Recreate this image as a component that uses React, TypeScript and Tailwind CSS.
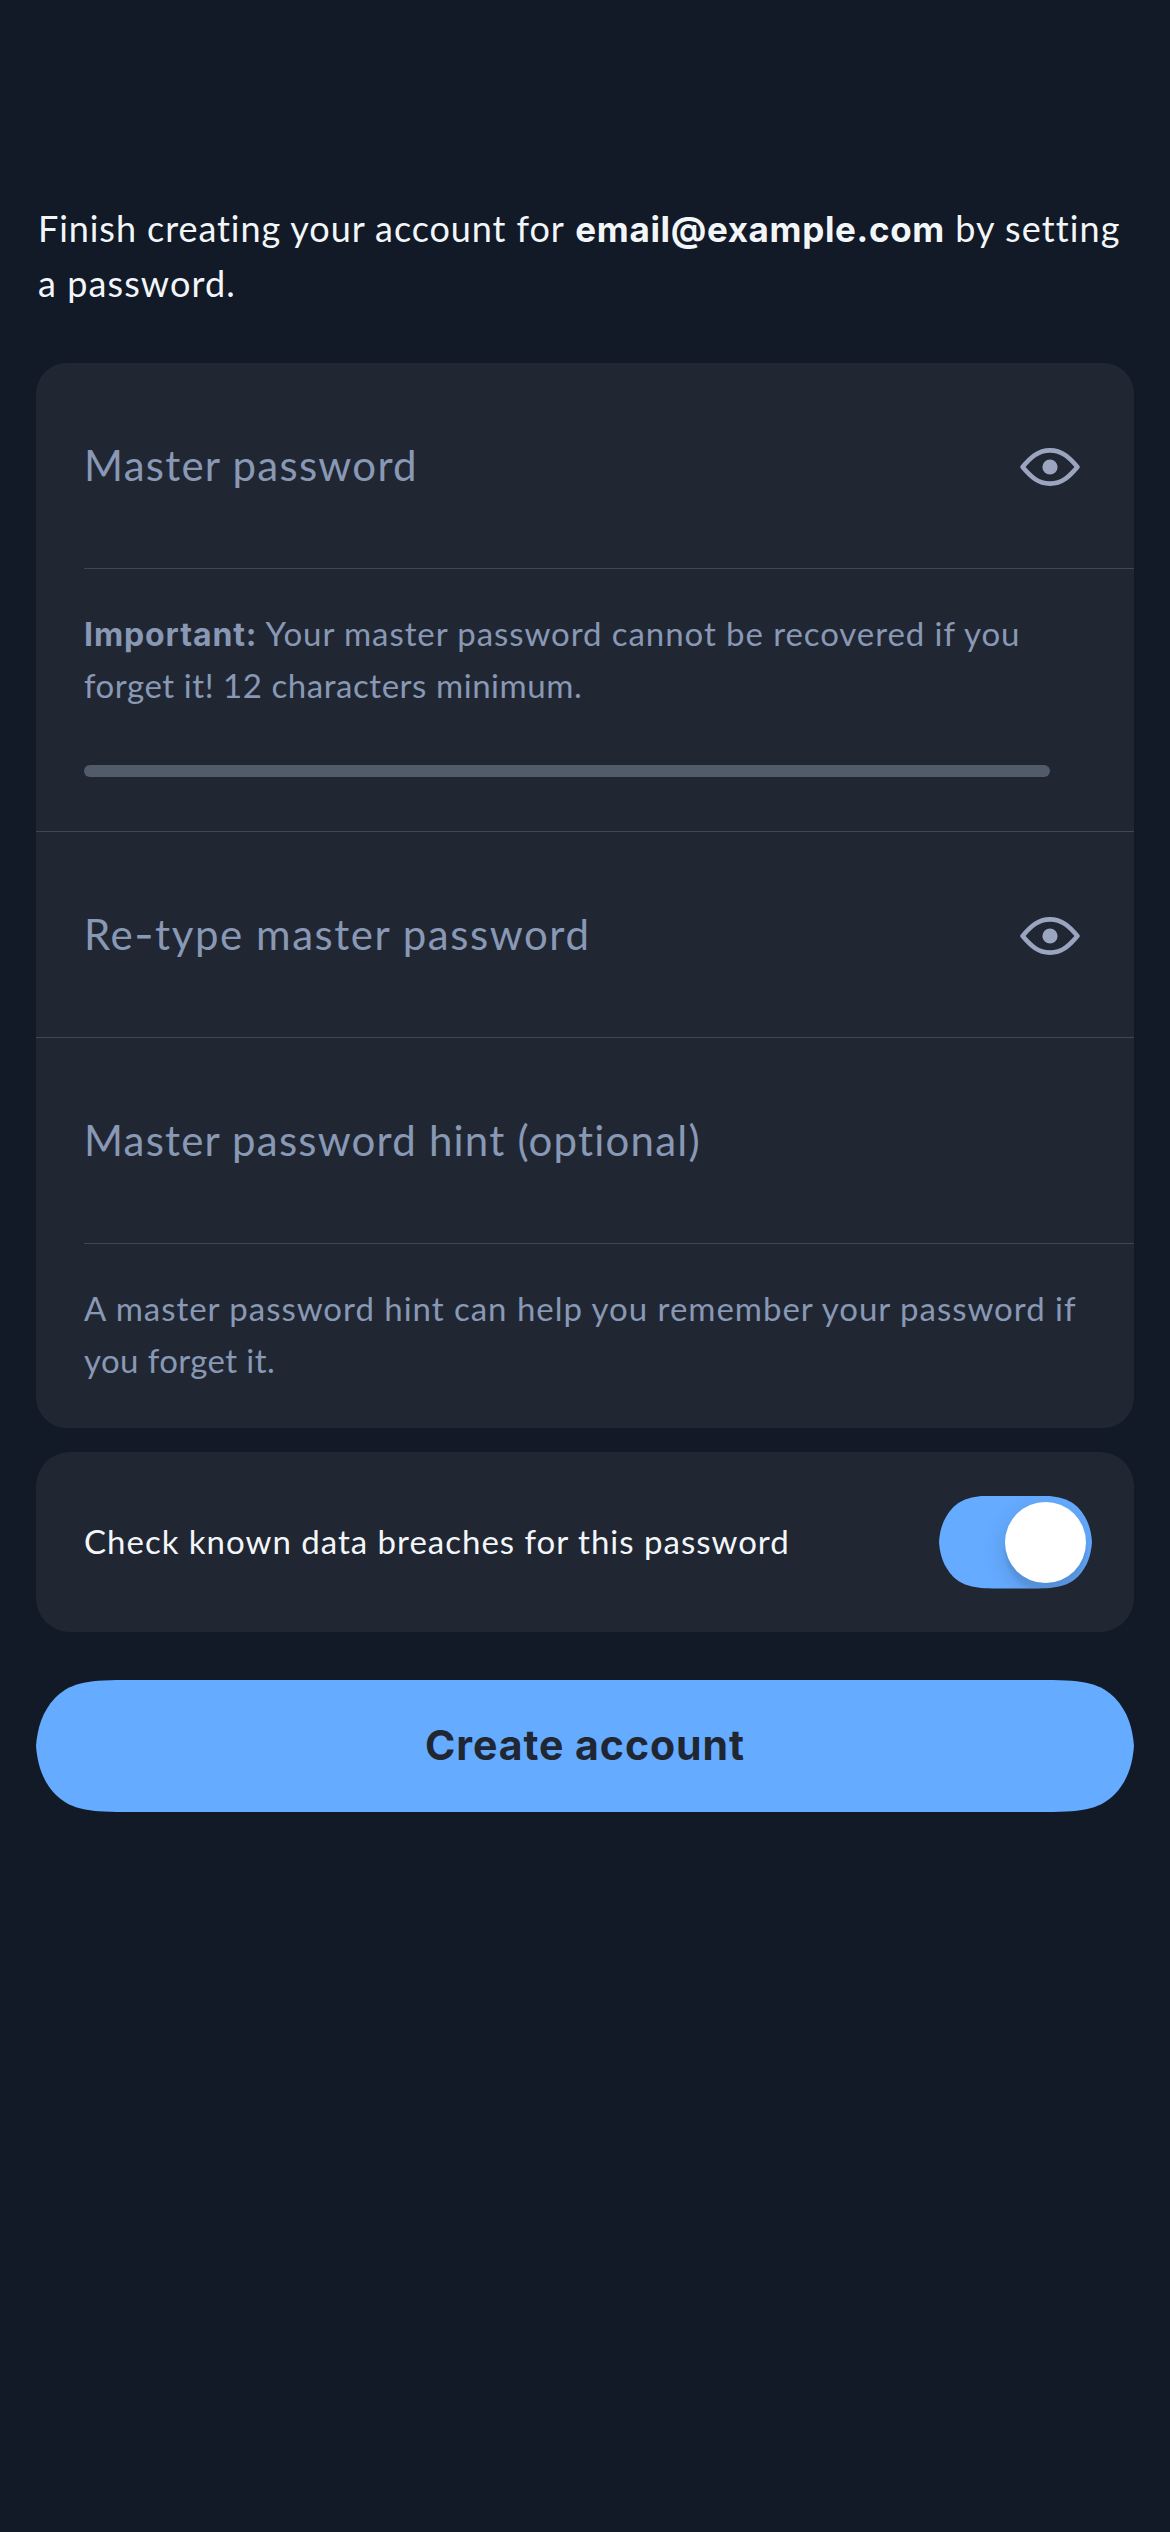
function EyeIcon() {
  return (
    <svg width="60" height="38" viewBox="0 0 60 38" fill="none" className="mt-[3px] block">
      <path
        d="M2.6 19C10.5 9.6 18 2.4 30 2.4S49.5 9.6 57.4 19C49.5 28.4 42 35.6 30 35.6S10.5 28.4 2.6 19Z"
        stroke="#9BA5BF"
        strokeWidth="4.6"
        strokeLinejoin="round"
      />
      <circle cx="30" cy="19" r="7.6" fill="#9BA5BF" />
    </svg>
  );
}

function Bold({ className, children }: { className: string; children: string }) {
  return <strong className={`font-['Inter',sans-serif] font-bold leading-none ${className}`}>{children}</strong>;
}

export default function App() {
  return (
    <main className="flex h-[2532px] w-[1170px] flex-col bg-[#121A27] px-9 pt-[201px] font-['Lato',sans-serif] text-[#F3F6F9]">
      <p className="h-[162px] whitespace-nowrap pl-[2px] text-[36px] leading-[55px]">
        <span className="block h-[55px]">
          <span className="tracking-[0.93px]">Finish creating your account for </span>
          <Bold className="ml-px text-[35px] tracking-[0.66px]">email@example.com</Bold>
          <span className="tracking-[1.1px]"> by setting</span>
        </span>
        <span className="block h-[55px] tracking-[1.08px]">a password.</span>
      </p>

      <section className="h-[1065px] overflow-hidden rounded-[31px] bg-[#202733] text-[#8898B5]">
        <div className="ml-12 flex h-[206px] items-center justify-between border-b border-[#404652] pr-[54px]">
          <span className="pb-px text-[42px] tracking-[1.26px]">Master password</span>
          <EyeIcon />
        </div>
        <div className="flex h-[263px] flex-col border-b border-[#404652] pl-12 pt-[38px]">
          <p className="h-[158px] whitespace-nowrap text-[33px] leading-[52px]">
            <span className="block h-[52px]">
              <Bold className="text-[32px] tracking-[0.9px]">Important:</Bold>
              <span className="tracking-[0.93px]"> Your master password cannot be recovered if you</span>
            </span>
            <span className="block h-[52px] tracking-[0.56px]">forget it! 12 characters minimum.</span>
          </p>
          <div className="h-3 w-[966px] rounded-full bg-[#525B6A]" />
        </div>
        <div className="flex h-[206px] items-center justify-between border-b border-[#404652] pl-12 pr-[54px]">
          <span className="whitespace-nowrap pb-px text-[42px] tracking-[1.55px]">
            Re<span className="font-['Inter',sans-serif] leading-none">-</span>type master password
          </span>
          <EyeIcon />
        </div>
        <div className="ml-12 flex h-[206px] items-center border-b border-[#404652]">
          <span className="pb-px text-[42px] tracking-[1.2px]">Master password hint (optional)</span>
        </div>
        <p className="whitespace-nowrap pl-12 pt-[38px] text-[33px] leading-[52px]">
          <span className="block tracking-[0.98px]">
            A master password hint can help you remember your password if
          </span>
          <span className="block tracking-[0.4px]">you forget it.</span>
        </p>
      </section>

      <section className="mt-6 flex h-[180px] items-center justify-between rounded-[34px] bg-[#202733] pl-12 pr-[42px]">
        <span className="text-[33px] tracking-[1px]">Check known data breaches for this password</span>
        <div
          role="switch"
          aria-checked="true"
          className="flex h-[93px] w-[153px] items-center justify-end bg-[#65ABFF] pr-[6px] [clip-path:path('M0,46.5C1,33_4.5,22.5_13.5,12.5C23,3_34,0_58,0H95C119,0_130,3_139.5,12.5C148.5,22.5_152,33_153,46.5C152,60_148.5,70.5_139.5,80.5C130,90_119,93_95,93H58C34,93_23,90_13.5,80.5C4.5,70.5_1,60_0,46.5Z')]"
        >
          <div className="size-[81px] rounded-full bg-white shadow-[0_9px_24px_rgba(0,0,0,0.15),0_9px_3px_rgba(0,0,0,0.06)]" />
        </div>
      </section>

      <button
        type="button"
        className="mt-12 h-[132px] w-[1098px] bg-[#65ABFF] pb-[2px] text-center text-[#202733] [clip-path:path('M0,66C1.5,48_6,32_19,18C33,4_48,0_88,0H1010C1050,0_1065,4_1079,18C1092,32_1096.5,48_1098,66C1096.5,84_1092,100_1079,114C1065,128_1050,132_1010,132H88C48,132_33,128_19,114C6,100_1.5,84_0,66Z')]"
      >
        <Bold className="text-[41px] tracking-[0.95px]">Create account</Bold>
      </button>
    </main>
  );
}
